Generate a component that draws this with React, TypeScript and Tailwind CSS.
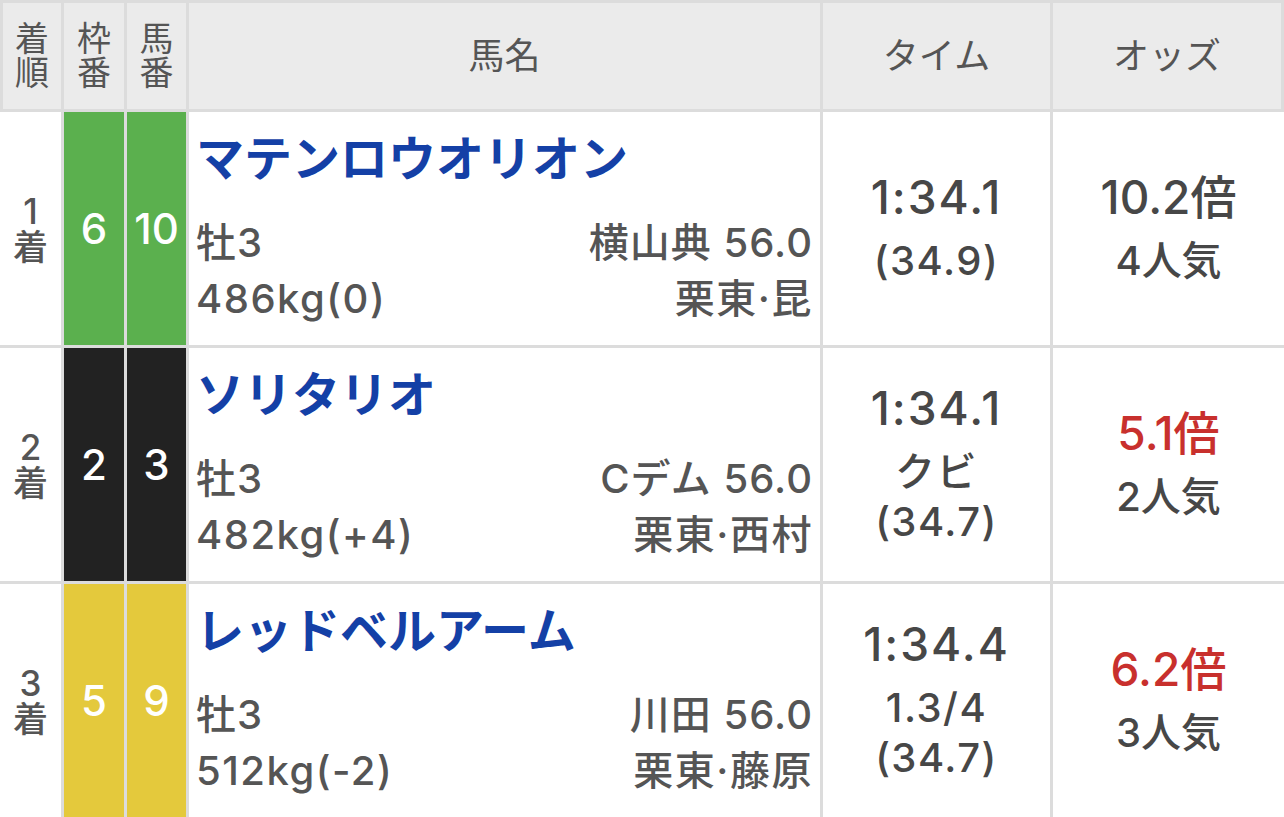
import React from "react";

type Row = {
  rank: string;
  waku: string;
  uma: string;
  bg: string;
  name: string;
  sex: string;
  jockey: string;
  weight: string;
  trainer: string;
  time: string;
  subs: string[];
  odds: string;
  red: boolean;
  pop: string;
};

const rows: Row[] = [
  {
    rank: "1",
    waku: "6",
    uma: "10",
    bg: "bg-[#5bb04e]",
    name: "マテンロウオリオン",
    sex: "牡3",
    jockey: "横山典 56.0",
    weight: "486kg(0)",
    trainer: "栗東·昆",
    time: "1:34.1",
    subs: ["(34.9)"],
    odds: "10.2倍",
    red: false,
    pop: "4人気",
  },
  {
    rank: "2",
    waku: "2",
    uma: "3",
    bg: "bg-[#222222]",
    name: "ソリタリオ",
    sex: "牡3",
    jockey: "Cデム 56.0",
    weight: "482kg(+4)",
    trainer: "栗東·西村",
    time: "1:34.1",
    subs: ["クビ", "(34.7)"],
    odds: "5.1倍",
    red: true,
    pop: "2人気",
  },
  {
    rank: "3",
    waku: "5",
    uma: "9",
    bg: "bg-[#e4c93c]",
    name: "レッドベルアーム",
    sex: "牡3",
    jockey: "川田 56.0",
    weight: "512kg(-2)",
    trainer: "栗東·藤原",
    time: "1:34.4",
    subs: ["1.3/4", "(34.7)"],
    odds: "6.2倍",
    red: true,
    pop: "3人気",
  },
];

const font = { fontFamily: '"Inter", "Noto Sans CJK JP", sans-serif' };

function Stack({ a, b }: { a: string; b: string }) {
  return (
    <div className="h-[106px] bg-[#ebebeb] flex items-center justify-center text-center text-[34px] leading-[34px]">
      <span>
        {a}
        <br />
        {b}
      </span>
    </div>
  );
}

export default function App() {
  return (
    <div className="w-[1284px] h-[817px] overflow-hidden bg-white text-[#555555]" style={font}>
      <div className="grid grid-cols-[58px_60px_59px_631px_227px_1fr] gap-[3px] bg-[#dcdcdc] px-[3px] py-[3px]">
        <Stack a="着" b="順" />
        <Stack a="枠" b="番" />
        <Stack a="馬" b="番" />
        <div className="h-[106px] bg-[#ebebeb] flex items-center justify-center text-[36px]">馬名</div>
        <div className="h-[106px] bg-[#ebebeb] flex items-center justify-center text-[36px]">タイム</div>
        <div className="h-[106px] bg-[#ebebeb] flex items-center justify-center text-[36px]">オッズ</div>
      </div>
      <div className="grid grid-cols-[61px_60px_59px_631px_227px_1fr] auto-rows-[233px] gap-[3px] bg-[#dcdcdc]">
        {rows.map((r) => (
          <React.Fragment key={r.rank}>
            <div className="bg-white flex items-center justify-center text-center text-[35px] leading-[36px] font-medium text-[#555555]">
              <span>
                {r.rank}
                <br />着
              </span>
            </div>
            <div className={`${r.bg} flex items-center justify-center text-white text-[42px] font-medium`}>
              {r.waku}
            </div>
            <div className={`${r.bg} flex items-center justify-center text-white text-[42px] font-medium`}>
              {r.uma}
            </div>
            <div className="bg-white pl-[7px] pr-[8px] pt-[19px] flex flex-col">
              <div className="text-[48px] leading-[56px] font-bold text-[#1440a6]">{r.name}</div>
              <div className="mt-[28px] flex justify-between text-[40px] leading-[56px] font-medium tracking-[1px] text-[#555555]">
                <span>{r.sex}</span>
                <span className="-mr-[1px]">{r.jockey}</span>
              </div>
              <div className="flex justify-between text-[40px] leading-[56px] font-medium tracking-[1.5px] text-[#555555]">
                <span>{r.weight}</span>
                <span className="-mr-[1px]">{r.trainer}</span>
              </div>
            </div>
            <div className="bg-white flex flex-col items-center justify-center text-[#474747] font-medium">
              <div className="text-[46px] leading-[50px] mb-[14px] tracking-[2px]">{r.time}</div>
              {r.subs.map((s) => (
                <div key={s} className="text-[40px] leading-[50px] tracking-[1.5px]">
                  {s}
                </div>
              ))}
            </div>
            <div className="bg-white flex flex-col items-center justify-center font-medium">
              <div
                className={`text-[46px] leading-[50px] mb-[14px] ${r.red ? "text-[#c8302d]" : "text-[#474747]"}`}
              >
                {r.odds}
              </div>
              <div className="text-[40px] leading-[50px] text-[#474747]">{r.pop}</div>
            </div>
          </React.Fragment>
        ))}
      </div>
    </div>
  );
}
